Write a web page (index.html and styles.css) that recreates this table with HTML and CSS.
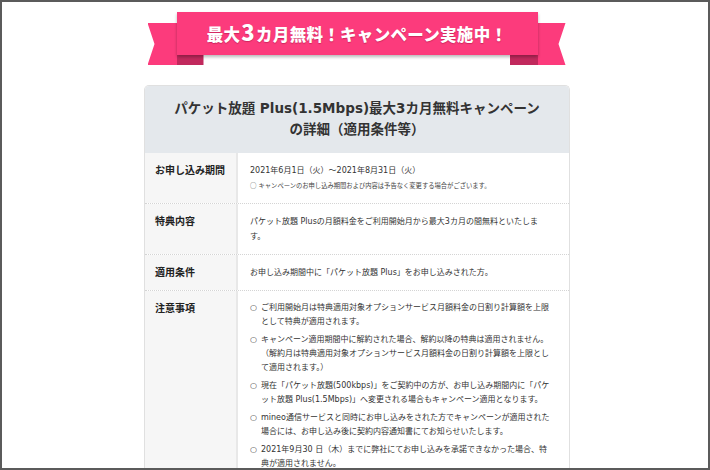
FILE: index.html
```html
<!DOCTYPE html>
<html lang="ja">
<head>
<meta charset="utf-8">
<title>パケット放題 Plus キャンペーン</title>
<link rel="stylesheet" href="styles.css">
</head>
<body>
<div class="frame">
  <div class="ribbon-wrap">
    <div class="ribbon">
      <span class="tail tail-left"></span>
      <span class="tail tail-right"></span>
      <p class="ribbon-text">最大<span class="big">3</span>カ月無料！キャンペーン実施中！</p>
    </div>
  </div>

  <section class="card">
    <h2 class="card-title">パケット放題 Plus(1.5Mbps)最大3カ月無料キャンペーン<br>の詳細（適用条件等）</h2>

    <div class="row">
      <div class="label">お申し込み期間</div>
      <div class="content">
        <p>2021年6月1日（火）～2021年8月31日（火）</p>
        <p class="note"><span class="note-mark">○</span> キャンペーンのお申し込み期間および内容は予告なく変更する場合がございます。</p>
      </div>
    </div>

    <div class="row">
      <div class="label">特典内容</div>
      <div class="content">
        <p>パケット放題 Plusの月額料金をご利用開始月から最大3カ月の間無料といたしま<br>す。</p>
      </div>
    </div>

    <div class="row">
      <div class="label">適用条件</div>
      <div class="content">
        <p>お申し込み期間中に「パケット放題 Plus」をお申し込みされた方。</p>
      </div>
    </div>

    <div class="row row-last">
      <div class="label">注意事項</div>
      <div class="content">
        <ul class="notes">
          <li><span class="mark">○</span><span class="txt">ご利用開始月は特典適用対象オプションサービス月額料金の日割り計算額を上限<br>として特典が適用されます。</span></li>
          <li><span class="mark">○</span><span class="txt">キャンペーン適用期間中に解約された場合、解約以降の特典は適用されません。<br>（解約月は特典適用対象オプションサービス月額料金の日割り計算額を上限とし<br>て適用されます。）</span></li>
          <li><span class="mark">○</span><span class="txt">現在「パケット放題(500kbps)」をご契約中の方が、お申し込み期間内に「パケ<br>ット放題 Plus(1.5Mbps)」へ変更される場合もキャンペーン適用となります。</span></li>
          <li><span class="mark">○</span><span class="txt">mineo通信サービスと同時にお申し込みをされた方でキャンペーンが適用された<br>場合には、お申し込み後に契約内容通知書にてお知らせいたします。</span></li>
          <li><span class="mark">○</span><span class="txt">2021年9月30 日（木）までに弊社にてお申し込みを承諾できなかった場合、特<br>典が適用されません。</span></li>
        </ul>
      </div>
    </div>
  </section>
</div>
</body>
</html>
```

FILE: styles.css
```css
* {
  box-sizing: border-box;
  margin: 0;
  padding: 0;
}

html, body {
  margin: 0;
  background: #ffffff;
}

body {
  font-family: "DejaVu Sans", "Noto Sans CJK JP", sans-serif;
  color: #333333;
}

.frame {
  width: 710px;
  height: 470px;
  border: 2px solid #5b5b5b;
  overflow: hidden;
  background: #ffffff;
  padding-left: 4px;
}

/* ---------- ribbon ---------- */
.ribbon-wrap {
  position: relative;
  z-index: 0;
  display: flex;
  justify-content: center;
  padding-top: 10px;
}

.ribbon {
  position: relative;
  width: 361px;
  height: 43px;
  background: #fc3b7c;
  box-shadow: 0 2px 3px rgba(0, 0, 0, 0.28);
  display: flex;
  align-items: center;
  justify-content: center;
}

.tail {
  position: absolute;
  top: 11px;
  width: 56px;
  height: 42px;
  z-index: -1;
}

.tail-left {
  left: -29px;
  background: linear-gradient(to right, #fc3b7c 29px, #c1295d 29px);
  clip-path: polygon(0 0, 100% 0, 100% 100%, 0 100%, 7px 50%);
}

.tail-right {
  right: -28px;
  background: linear-gradient(to right, #c1295d 28px, #fc3b7c 28px);
  clip-path: polygon(0 0, 100% 0, calc(100% - 7px) 50%, 100% 100%, 0 100%);
}

.ribbon-text {
  font-family: "Noto Sans CJK JP", sans-serif;
  font-weight: 900;
  font-size: 16.5px;
  line-height: 22px;
  color: #ffffff;
  letter-spacing: 0.3px;
  text-shadow: 0 1px 1px rgba(120, 0, 40, 0.35);
  margin-top: -2px;
}

.ribbon-text .big {
  font-size: 22px;
  margin: 0 1px;
}

/* ---------- card ---------- */
.card {
  width: 426px;
  margin: 30px auto 0;
  border: 1px solid #e0e0e0;
  border-bottom: none;
  border-radius: 5px 5px 0 0;
}

.card-title {
  background: #e4e8ec;
  border-radius: 4px 4px 0 0;
  padding: 12px 10px 13px;
  text-align: center;
  font-size: 13.5px;
  line-height: 21px;
  font-weight: bold;
  color: #333333;
}

.row {
  display: grid;
  grid-template-columns: 93px 1fr;
  border-bottom: 1px dotted #d4d4d4;
}

.row-last {
  border-bottom: none;
}

.label {
  background: #f6f6f6;
  border-right: 2px solid #e8e8e8;
  padding: 10px 6px 10px 10px;
  font-size: 10px;
  line-height: 15px;
  font-weight: bold;
  color: #222222;
}

.content {
  padding: 10px 4px 10px 12px;
  font-size: 8px;
  line-height: 15px;
  color: #333333;
}

.content .note {
  font-size: 6.3px;
  line-height: 14px;
  color: #444444;
}

.note-mark {
  font-family: "Noto Sans CJK JP", sans-serif;
  font-size: 6.5px;
  color: #555555;
}

.notes {
  list-style: none;
  line-height: 14px;
}

.notes li {
  display: flex;
}

.notes li + li {
  margin-top: 4px;
}

.notes .mark {
  flex: 0 0 11px;
  color: #444444;
}

.notes .txt {
  flex: 1;
}
```
